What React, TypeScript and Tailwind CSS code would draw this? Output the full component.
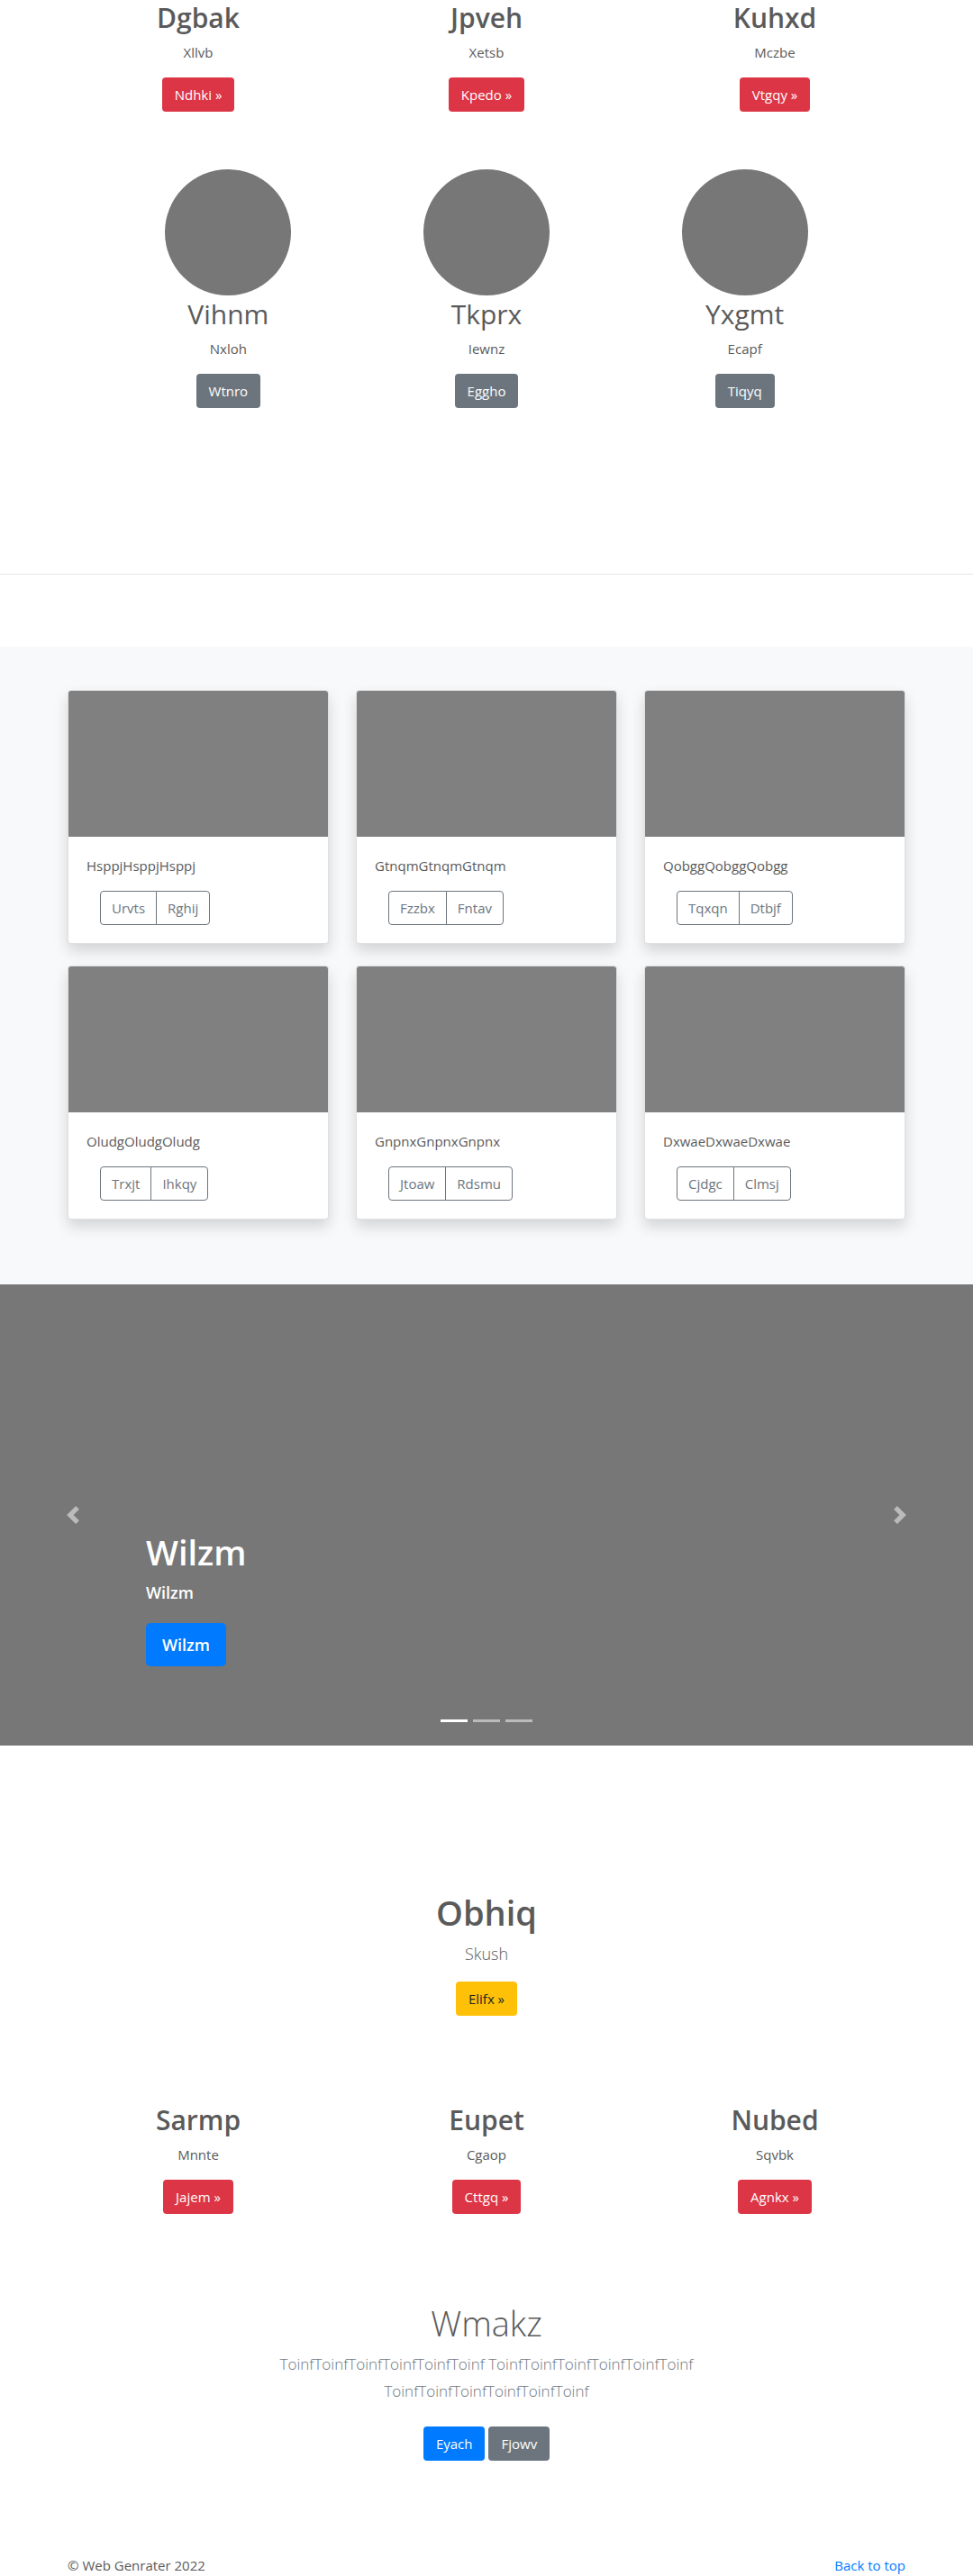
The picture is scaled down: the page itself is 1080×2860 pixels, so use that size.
import React from "react";

type Feature = { title: string; text: string; action: string };

const topFeatures: Feature[] = [
  { title: "Dgbak", text: "Xllvb", action: "Ndhki »" },
  { title: "Jpveh", text: "Xetsb", action: "Kpedo »" },
  { title: "Kuhxd", text: "Mczbe", action: "Vtgqy »" },
];

const bottomFeatures: Feature[] = [
  { title: "Sarmp", text: "Mnnte", action: "Jajem »" },
  { title: "Eupet", text: "Cgaop", action: "Cttgq »" },
  { title: "Nubed", text: "Sqvbk", action: "Agnkx »" },
];

const people: Feature[] = [
  { title: "Vihnm", text: "Nxloh", action: "Wtnro" },
  { title: "Tkprx", text: "Iewnz", action: "Eggho" },
  { title: "Yxgmt", text: "Ecapf", action: "Tiqyq" },
];

const cards = [
  { text: "HsppjHsppjHsppj", actions: ["Urvts", "Rghij"] },
  { text: "GtnqmGtnqmGtnqm", actions: ["Fzzbx", "Fntav"] },
  { text: "QobggQobggQobgg", actions: ["Tqxqn", "Dtbjf"] },
  { text: "OludgOludgOludg", actions: ["Trxjt", "Ihkqy"] },
  { text: "GnpnxGnpnxGnpnx", actions: ["Jtoaw", "Rdsmu"] },
  { text: "DxwaeDxwaeDxwae", actions: ["Cjdgc", "Clmsj"] },
];

const variants = {
  danger: "bg-[#dc3545] text-white",
  secondary: "bg-[#6c757d] text-white",
  primary: "bg-[#007bff] text-white",
  warning: "bg-[#ffc107] text-[#212529]",
};

function Button({ variant, children }: { variant: keyof typeof variants; children: React.ReactNode }) {
  return (
    <button type="button" className={`h-[38px] cursor-pointer rounded px-[14px] ${variants[variant]}`}>
      {children}
    </button>
  );
}

function FeatureRow({ items }: { items: Feature[] }) {
  return (
    <section className="mx-auto grid max-w-[960px] grid-cols-3">
      {items.map((f) => (
        <div key={f.title} className="flex flex-col items-center px-[15px] text-center">
          <h2 className="mb-[6px] text-[30px] leading-[40px] font-semibold">{f.title}</h2>
          <p className="mb-4">{f.text}</p>
          <Button variant="danger">{f.action}</Button>
        </div>
      ))}
    </section>
  );
}

function Carousel() {
  return (
    <section className="relative flex h-[512px] flex-col items-start justify-end bg-[#777] px-[15%] pb-[88px] text-[18px] font-semibold text-white">
      <h1 className="mb-[6px] text-[38px] leading-[50px]">Wilzm</h1>
      <p className="mb-5 leading-7">Wilzm</p>
      <button type="button" className="h-12 cursor-pointer rounded-[5px] bg-[#007bff] px-[18px]">
        Wilzm
      </button>
      <button
        type="button"
        aria-label="Previous"
        className="absolute inset-y-0 left-0 flex w-[15%] cursor-pointer items-center justify-center opacity-50"
      >
        <svg viewBox="0 0 8 8" fill="#fff" className="size-5" aria-hidden="true">
          <path d="M5.25 0l-4 4 4 4 1.5-1.5L4.25 4l2.5-2.5L5.25 0z" />
        </svg>
      </button>
      <button
        type="button"
        aria-label="Next"
        className="absolute inset-y-0 right-0 flex w-[15%] cursor-pointer items-center justify-center opacity-50"
      >
        <svg viewBox="0 0 8 8" fill="#fff" className="size-5" aria-hidden="true">
          <path d="M2.75 0l-1.5 1.5L3.75 4l-2.5 2.5L2.75 8l4-4-4-4z" />
        </svg>
      </button>
      <div className="absolute inset-x-0 bottom-[26px] flex justify-center gap-[6px]">
        <button type="button" aria-label="Slide 1" className="h-[3px] w-[30px] bg-white" />
        <button type="button" aria-label="Slide 2" className="h-[3px] w-[30px] bg-white/50" />
        <button type="button" aria-label="Slide 3" className="h-[3px] w-[30px] bg-white/50" />
      </div>
    </section>
  );
}

export default function App() {
  return (
    <div className="bg-white font-['Open_Sans',sans-serif] text-[15px] leading-6 text-[#5a5a5a]">
      <FeatureRow items={topFeatures} />

      <section className="mx-auto mt-16 grid max-w-[860px] grid-cols-3">
        {people.map((p) => (
          <div key={p.title} className="flex flex-col items-center text-center">
            <div className="size-[140px] rounded-full bg-[#777]" />
            <h2 className="mt-px mb-[6px] text-[30px] leading-[40px]">{p.title}</h2>
            <p className="mb-4">{p.text}</p>
            <Button variant="secondary">{p.action}</Button>
          </div>
        ))}
      </section>

      <hr className="mt-[184px] mb-20 border-black/10" />

      <section className="bg-[#f8f9fa] pt-12 pb-[72px]">
        <div className="mx-auto grid max-w-[960px] grid-cols-3 gap-x-[30px] gap-y-6 px-[15px]">
          {cards.map((c) => (
            <article
              key={c.text}
              className="rounded border border-black/12 bg-white bg-clip-border shadow-[0_8px_16px_rgba(0,0,0,0.15)]"
            >
              <div className="h-[162px] rounded-t-[3px] bg-[#808080]" />
              <div className="p-5">
                <p className="mb-4">{c.text}</p>
                <div className="ml-[15px] flex text-[#6c757d]">
                  <button type="button" className="h-[38px] cursor-pointer rounded-l border border-[#6c757d] px-3">
                    {c.actions[0]}
                  </button>
                  <button
                    type="button"
                    className="-ml-px h-[38px] cursor-pointer rounded-r border border-[#6c757d] px-3"
                  >
                    {c.actions[1]}
                  </button>
                </div>
              </div>
            </article>
          ))}
        </div>
      </section>

      <Carousel />

      <section className="flex flex-col items-center pt-40 pb-24 text-center">
        <h1 className="mb-[6px] text-[38px] leading-[50px] font-semibold">Obhiq</h1>
        <p className="mb-4 text-[18px] leading-[30px] font-light">Skush</p>
        <Button variant="warning">Elifx »</Button>
      </section>

      <FeatureRow items={bottomFeatures} />

      <section className="mx-auto flex max-w-[500px] flex-col items-center pt-24 pb-[104px] text-center">
        <h1 className="mb-[6px] text-[38px] leading-[50px] font-light">Wmakz</h1>
        <p className="mb-6 text-[17px] leading-[30px] font-light text-[#6c757d]">
          ToinfToinfToinfToinfToinfToinf ToinfToinfToinfToinfToinfToinf ToinfToinfToinfToinfToinfToinf
        </p>
        <div className="flex gap-1">
          <Button variant="primary">Eyach</Button>
          <Button variant="secondary">Fjowv</Button>
        </div>
      </section>

      <footer className="mx-auto flex max-w-[960px] justify-between px-[15px]">
        <p>© Web Genrater 2022</p>
        <a href="#" className="text-[#007bff]">
          Back to top
        </a>
      </footer>
    </div>
  );
}
